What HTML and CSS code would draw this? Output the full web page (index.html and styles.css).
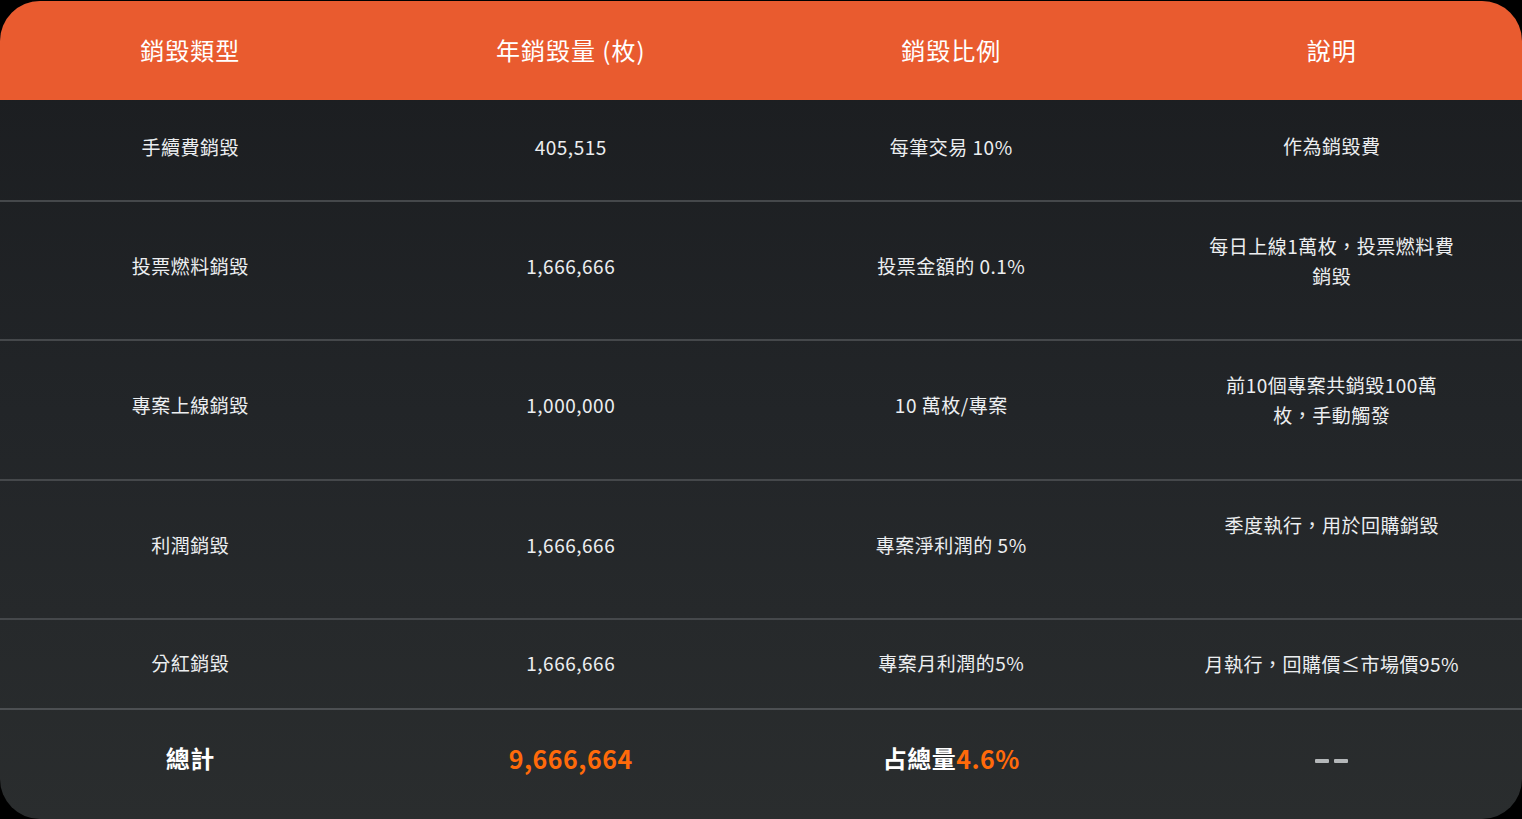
FILE: index.html
```html
<!DOCTYPE html>
<html lang="zh-Hant">
<head>
<meta charset="utf-8">
<title>銷毀類型</title>
<link rel="stylesheet" href="styles.css">
</head>
<body>
<div class="table">
  <div class="row head">
    <div class="cell">銷毀類型</div>
    <div class="cell">年銷毀量 (枚)</div>
    <div class="cell">銷毀比例</div>
    <div class="cell">說明</div>
  </div>
  <div class="row r1">
    <div class="cell">手續費銷毀</div>
    <div class="cell">405,515</div>
    <div class="cell">每筆交易 10%</div>
    <div class="cell desc">作為銷毀費</div>
  </div>
  <div class="row r2">
    <div class="cell">投票燃料銷毀</div>
    <div class="cell">1,666,666</div>
    <div class="cell">投票金額的 0.1%</div>
    <div class="cell desc">每日上線1萬枚，投票燃料費<br>銷毀</div>
  </div>
  <div class="row r3">
    <div class="cell">專案上線銷毀</div>
    <div class="cell">1,000,000</div>
    <div class="cell">10 萬枚/專案</div>
    <div class="cell desc">前10個專案共銷毀100萬<br>枚，手動觸發</div>
  </div>
  <div class="row r4">
    <div class="cell">利潤銷毀</div>
    <div class="cell">1,666,666</div>
    <div class="cell">專案淨利潤的 5%</div>
    <div class="cell desc">季度執行，用於回購銷毀</div>
  </div>
  <div class="row r5">
    <div class="cell">分紅銷毀</div>
    <div class="cell">1,666,666</div>
    <div class="cell">專案月利潤的5%</div>
    <div class="cell desc">月執行，回購價≤市場價95%</div>
  </div>
  <div class="row total">
    <div class="cell">總計</div>
    <div class="cell"><span class="hl">9,666,664</span></div>
    <div class="cell">占總量<span class="hl">4.6%</span></div>
    <div class="cell dash" aria-label="--"><span class="bar"></span><span class="bar"></span></div>
  </div>
</div>
</body>
</html>
```

FILE: styles.css
```css
html, body {
  margin: 0;
  padding: 0;
  background: #000;
}
body {
  width: 1522px;
  height: 819px;
  overflow: hidden;
  font-family: "Noto Sans CJK TC", "Noto Sans", sans-serif;
}
.table {
  width: 1522px;
  height: 818px;
  margin-top: 1px;
  border-radius: 40px;
  overflow: hidden;
  background: linear-gradient(180deg, #1a1c1f 0%, #222528 50%, #2a2d2e 100%);
  display: flex;
  flex-direction: column;
}
.row {
  display: grid;
  grid-template-columns: repeat(4, 1fr);
  border-bottom: 2px solid #45484b;
  box-sizing: border-box;
}
.cell {
  display: flex;
  align-items: center;
  justify-content: center;
  text-align: center;
  color: #eceef0;
  font-size: 19px;
  letter-spacing: 0.5px;
  line-height: 30px;
  padding-bottom: 10px;
}
.head {
  height: 99px;
  background: #e95b2f;
  border-bottom: none;
}
.head .cell {
  font-size: 24px;
  color: #fff;
  letter-spacing: 1px;
  padding-bottom: 2px;
}
.r1 { height: 102px; }
.r1 .cell { padding-bottom: 6px; }
.r2 { height: 139px; }
.r3 { height: 140px; }
.r4 { height: 139px; }
.r5 { height: 90px; border-bottom-color: #4c4f52; }
.r5 .cell { padding-bottom: 2px; }
.desc,
.r1 .desc,
.r5 .desc {
  align-items: flex-start;
  padding-top: 29px;
  padding-bottom: 0;
}
.r1 .desc { padding-top: 31px; }
.total {
  flex: 1;
  border-bottom: none;
}
.total .cell {
  font-size: 24px;
  font-weight: 700;
  color: #fff;
  padding-bottom: 14px;
}
.hl {
  color: #ff6a0a;
  font-size: 25px;
}
.total .dash {
  gap: 5px;
  padding-bottom: 8px;
}
.bar {
  display: block;
  width: 14px;
  height: 4px;
  border-radius: 1px;
  background: #b4b7b9;
}
```
